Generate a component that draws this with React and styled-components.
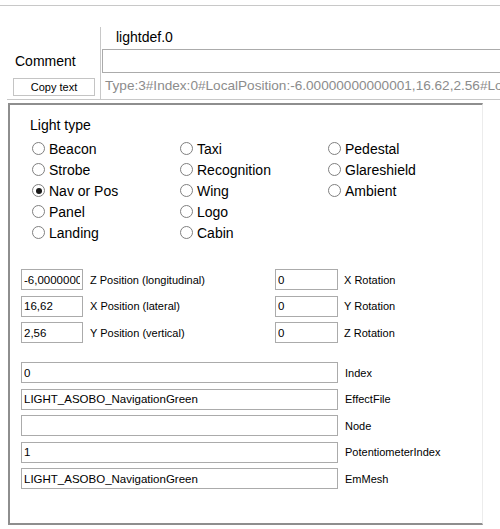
import React from "react";
import styled, { createGlobalStyle } from "styled-components";

const GlobalStyle = createGlobalStyle`
  html, body {
    margin: 0;
    padding: 0;
    background: #fff;
    overflow: hidden;
  }
  body {
    font-family: "Liberation Sans", Arial, sans-serif;
    color: #000;
  }
`;

const Page = styled.div`
  width: 500px;
  height: 529px;
  overflow: hidden;
  padding-top: 5px;
  box-sizing: border-box;
`;

const TopRule = styled.div`
  border-top: 1px solid #c8c8c8;
  height: 21px;
`;

const Header = styled.div`
  display: grid;
  grid-template-columns: 93px 1fr;
  margin-left: 7px;
  border-bottom: 1px solid #c8c8c8;
`;

const LeftCol = styled.div`
  display: grid;
  grid-template-rows: 22px 24px 26px;
`;

const RightCol = styled.div`
  display: grid;
  grid-template-rows: 22px 24px 26px;
  border-left: 1px solid #c8c8c8;
  padding-left: 1px;
  overflow: hidden;
`;

const CommentLabel = styled.div`
  font-size: 14px;
  line-height: 24px;
  padding-left: 8px;
`;

const CopyButton = styled.button`
  margin: 5px 0 0 6px;
  width: 82px;
  height: 18px;
  padding: 0;
  border: 1px solid #c4c4c4;
  background: #fff;
  font-family: "Liberation Sans", Arial, sans-serif;
  font-size: 11px;
  color: #000;
`;

const NameText = styled.div`
  font-size: 14px;
  line-height: 20px;
  padding: 0 0 0 14px;
`;

const CommentBox = styled.input`
  width: 440px;
  height: 24px;
  box-sizing: border-box;
  border: 1px solid #ababab;
  margin: 0;
  outline: none;
`;

const TypeLine = styled.div`
  font-size: 13.6px;
  line-height: 26px;
  padding-left: 3px;
  color: #8c8c8c;
  white-space: nowrap;
`;

const Group = styled.div`
  margin: 3px 17px 0 8px;
  height: 422px;
  box-sizing: border-box;
  border-top: 2px solid #8e8e8e;
  border-left: 2px solid #8e8e8e;
  border-bottom: 2px solid #8e8e8e;
  border-right: 1px solid #ececec;
  padding: 12px 0 0 11px;
`;

const GroupTitle = styled.div`
  font-size: 14px;
  line-height: 16px;
  padding-left: 9px;
`;

const RadioGrid = styled.div`
  display: grid;
  grid-template-columns: 148px 148px 1fr;
  grid-auto-rows: 21px;
  margin-top: 5px;
  padding-left: 11px;
`;

const RadioOption = styled.label`
  display: flex;
  align-items: center;
  gap: 4px;
  font-size: 14px;
  grid-column: ${({ col }) => col};
  grid-row: ${({ row }) => row};
`;

const RadioCircle = styled.span`
  width: 13px;
  height: 13px;
  box-sizing: border-box;
  border-radius: 50%;
  border: 1px solid #808080;
  background: #fff;
  display: flex;
  align-items: center;
  justify-content: center;
  flex: none;

  &::after {
    content: "";
    width: 6px;
    height: 6px;
    border-radius: 50%;
    background: ${({ checked }) => (checked ? "#1a1a1a" : "transparent")};
  }
`;

const PositionGrid = styled.div`
  display: grid;
  grid-template-columns: 254px 1fr;
  row-gap: 5.5px;
  margin-top: 26px;
`;

const FieldRow = styled.div`
  display: flex;
  align-items: center;
  font-size: 11px;
`;

const Box = styled.input`
  width: ${({ w }) => w}px;
  height: 21px;
  box-sizing: border-box;
  border: 1px solid #ababab;
  margin: 0 ${({ gap }) => gap}px 0 0;
  padding: 0 2px;
  font-family: "Liberation Sans", Arial, sans-serif;
  font-size: 11.5px;
  color: #000;
  outline: none;
  flex: none;
`;

const FieldList = styled.div`
  display: flex;
  flex-direction: column;
  gap: 5.5px;
  margin-top: 19px;
`;

const lightTypes = [
  ["Beacon", 1, 1], ["Strobe", 1, 2], ["Nav or Pos", 1, 3], ["Panel", 1, 4], ["Landing", 1, 5],
  ["Taxi", 2, 1], ["Recognition", 2, 2], ["Wing", 2, 3], ["Logo", 2, 4], ["Cabin", 2, 5],
  ["Pedestal", 3, 1], ["Glareshield", 3, 2], ["Ambient", 3, 3],
];

const positions = [
  ["-6,00000000000001", "Z Position (longitudinal)", "0", "X Rotation"],
  ["16,62", "X Position (lateral)", "0", "Y Rotation"],
  ["2,56", "Y Position (vertical)", "0", "Z Rotation"],
];

const fields = [
  ["0", "Index"],
  ["LIGHT_ASOBO_NavigationGreen", "EffectFile"],
  ["", "Node"],
  ["1", "PotentiometerIndex"],
  ["LIGHT_ASOBO_NavigationGreen", "EmMesh"],
];

export default function App() {
  return (
    <Page>
      <GlobalStyle />
      <TopRule />
      <Header>
        <LeftCol>
          <div />
          <CommentLabel>Comment</CommentLabel>
          <div>
            <CopyButton>Copy text</CopyButton>
          </div>
        </LeftCol>
        <RightCol>
          <NameText>lightdef.0</NameText>
          <CommentBox readOnly value="" />
          <TypeLine>Type:3#Index:0#LocalPosition:-6.00000000000001,16.62,2.56#LocalRotation</TypeLine>
        </RightCol>
      </Header>

      <Group>
        <GroupTitle>Light type</GroupTitle>
        <RadioGrid>
          {lightTypes.map(([name, col, row]) => (
            <RadioOption key={name} col={col} row={row}>
              <RadioCircle checked={name === "Nav or Pos"} />
              {name}
            </RadioOption>
          ))}
        </RadioGrid>

        <PositionGrid>
          {positions.map(([v1, l1, v2, l2]) => (
            <React.Fragment key={l1}>
              <FieldRow>
                <Box w={62} gap={7} readOnly value={v1} />
                {l1}
              </FieldRow>
              <FieldRow>
                <Box w={63} gap={6} readOnly value={v2} />
                {l2}
              </FieldRow>
            </React.Fragment>
          ))}
        </PositionGrid>

        <FieldList>
          {fields.map(([value, label]) => (
            <FieldRow key={label}>
              <Box w={317} gap={7} readOnly value={value} />
              {label}
            </FieldRow>
          ))}
        </FieldList>
      </Group>
    </Page>
  );
}
